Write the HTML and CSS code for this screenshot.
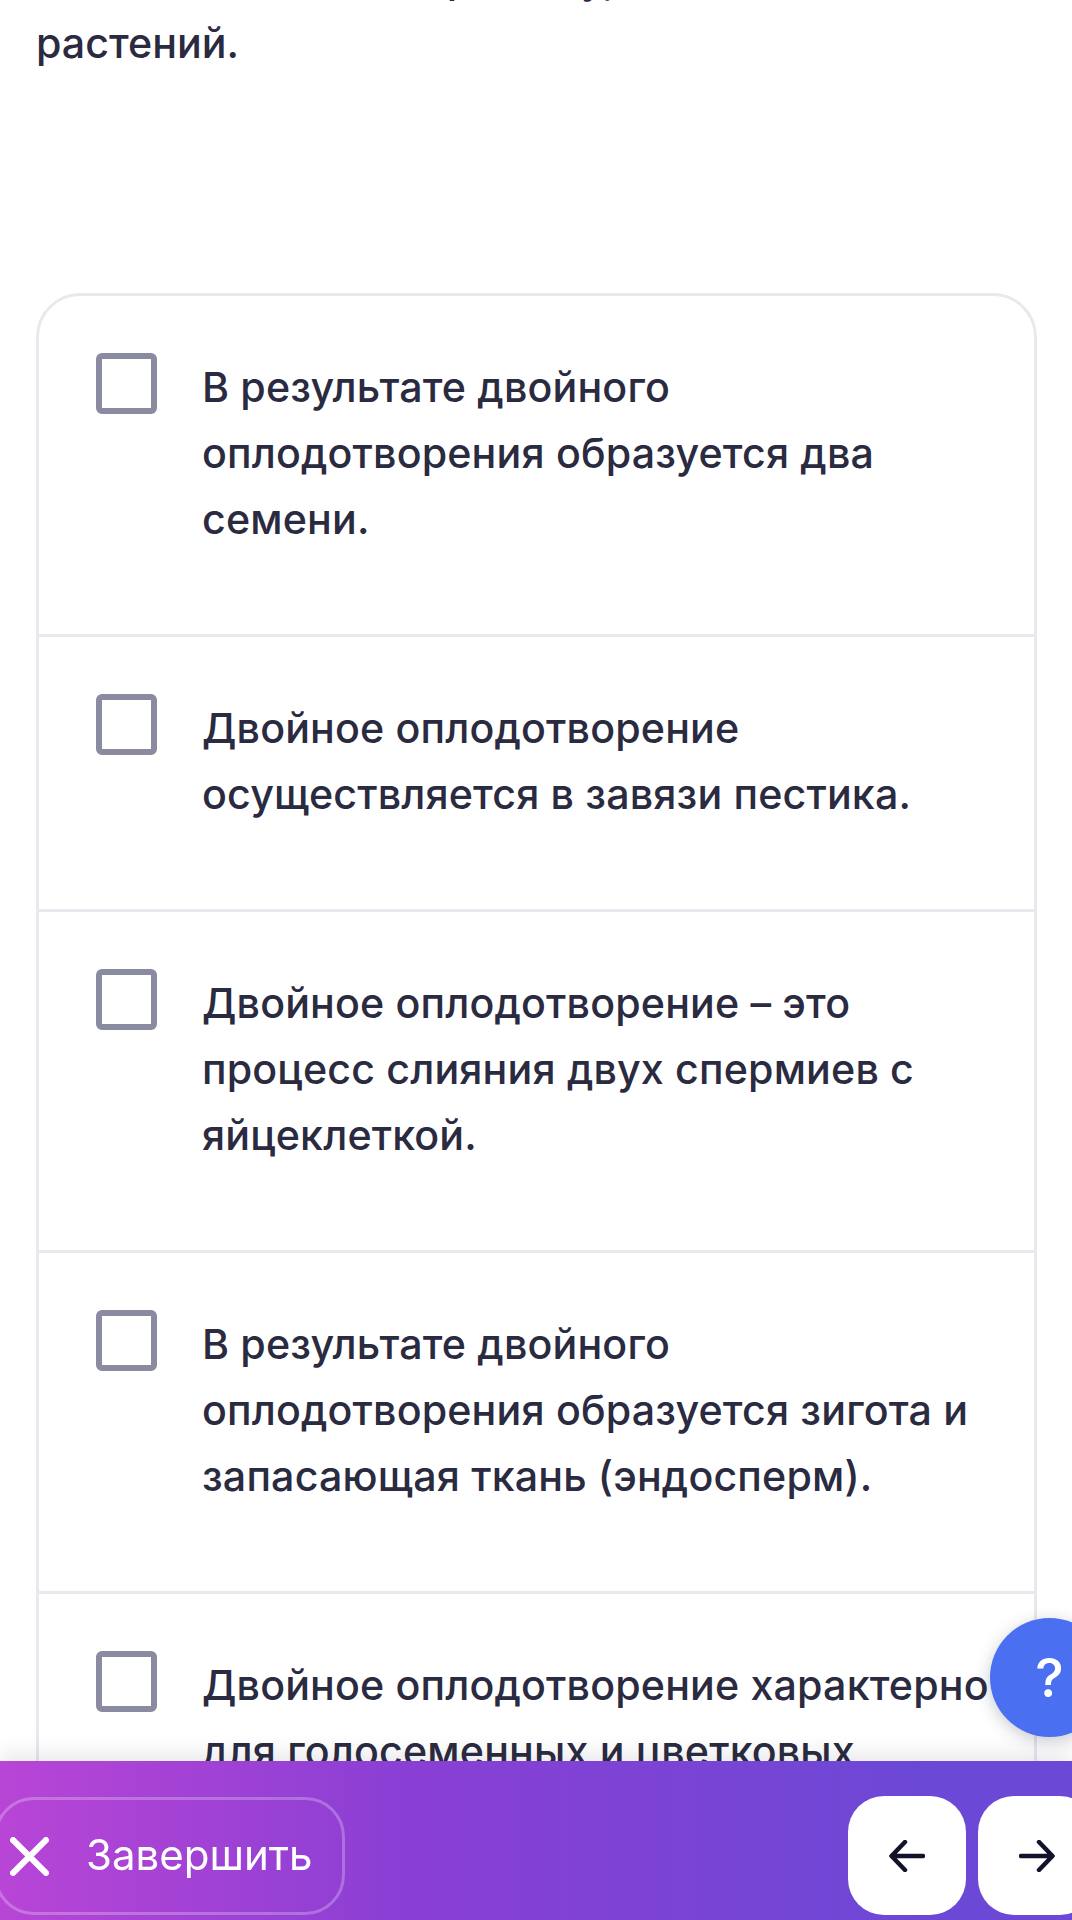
FILE: index.html
```html
<!DOCTYPE html>
<html lang="ru">
<head>
<meta charset="utf-8">
<title>Тест</title>
<link rel="stylesheet" href="styles.css">
</head>
<body>
<main class="page">
  <p class="question">Двойное оплодотворение у,<br>растений.</p>
  <ul class="options">
    <li class="option"><span class="box"></span><span class="label">В результате двойного оплодотворения образуется два семени.</span></li>
    <li class="option"><span class="box"></span><span class="label">Двойное оплодотворение осуществляется в завязи пестика.</span></li>
    <li class="option"><span class="box"></span><span class="label">Двойное оплодотворение – это процесс слияния двух спермиев с яйцеклеткой.</span></li>
    <li class="option"><span class="box"></span><span class="label">В результате двойного оплодотворения образуется зигота и запасающая ткань (эндосперм).</span></li>
    <li class="option"><span class="box"></span><span class="label">Двойное оплодотворение характерно для голосеменных и цветковых</span></li>
  </ul>
</main>
<button class="help" type="button">?</button>
<footer class="bar">
  <button class="finish" type="button">
    <svg class="finish-icon" viewBox="0 0 38 38" aria-hidden="true"><path d="M3 3 35 35M35 3 3 35"/></svg>
    <span class="finish-label">Завершить</span>
  </button>
  <div class="nav">
    <button class="nav-btn" type="button" aria-label="Назад">
      <svg viewBox="0 0 36 32" aria-hidden="true"><path d="M34 16H3M16 2 2.500 16 16 30"/></svg>
    </button>
    <button class="nav-btn" type="button" aria-label="Вперёд">
      <svg viewBox="0 0 36 32" aria-hidden="true"><path d="M2 16H33M20 2 33.500 16 20 30"/></svg>
    </button>
  </div>
</footer>
</body>
</html>
```

FILE: styles.css
```css
* { box-sizing: border-box; }
html, body { margin: 0; height: 1920px; overflow: hidden; background: #fff; }
body { font-family: Inter, "Noto Sans", sans-serif; color: #2a2a40; }
.page { padding: 0 36px; }
.question { margin: -54px 0 0; font-size: 41.200px; font-weight: 500; line-height: 65px; }
.options { list-style: none; margin: 217px 0 0; padding: 0; width: 1001px; border: 3px solid #e8e8ef; border-radius: 44px; }
.option { display: flex; align-items: flex-start; gap: 45px; padding: 57px 40px 82px 57px; border-bottom: 3px solid #e8e8ef; }
.box { flex: none; width: 61px; height: 61px; border: 6px solid #8a8aa0; border-radius: 6px; }
.label { flex: 1; padding-top: 1px; font-size: 41.200px; font-weight: 500; line-height: 66px; letter-spacing: .15px; }
.help { position: fixed; left: 990px; top: 1618px; width: 119px; height: 119px; padding: 0; border: 0; border-radius: 50%; background: #4a6ff0; color: #fff; font: 500 54px/119px Inter, sans-serif; text-align: center; box-shadow: 0 4px 16px rgba(40, 40, 70, .25); }
.bar { position: fixed; left: 0; right: 0; bottom: 0; height: 159px; display: flex; align-items: flex-start; justify-content: space-between; padding-top: 35px; background: linear-gradient(90deg, #b845d6 0%, #8a3fd4 38%, #6b48d6 88%); box-shadow: 0 -8px 20px rgba(40, 40, 70, .1); }
.finish { display: flex; align-items: center; gap: 37px; width: 351px; height: 118px; margin: 1px 0 0 -6px; padding: 0 0 0 13px; background: transparent; border: 3px solid rgba(255, 255, 255, .25); border-radius: 40px; color: #fff; font: 400 42px Inter, sans-serif; }
.finish-icon { width: 39px; height: 39px; flex: none; fill: none; stroke: #fff; stroke-width: 6; stroke-linecap: round; }
.finish-label { margin-bottom: 4px; }
.nav { display: flex; gap: 12px; margin-right: -24px; }
.nav-btn { display: flex; align-items: center; justify-content: center; width: 118px; height: 119px; padding: 0; border: 0; border-radius: 36px; background: #fff; }
.nav-btn svg { width: 36px; height: 32px; fill: none; stroke: #12122a; stroke-width: 4.500; stroke-linecap: round; stroke-linejoin: round; }
```
